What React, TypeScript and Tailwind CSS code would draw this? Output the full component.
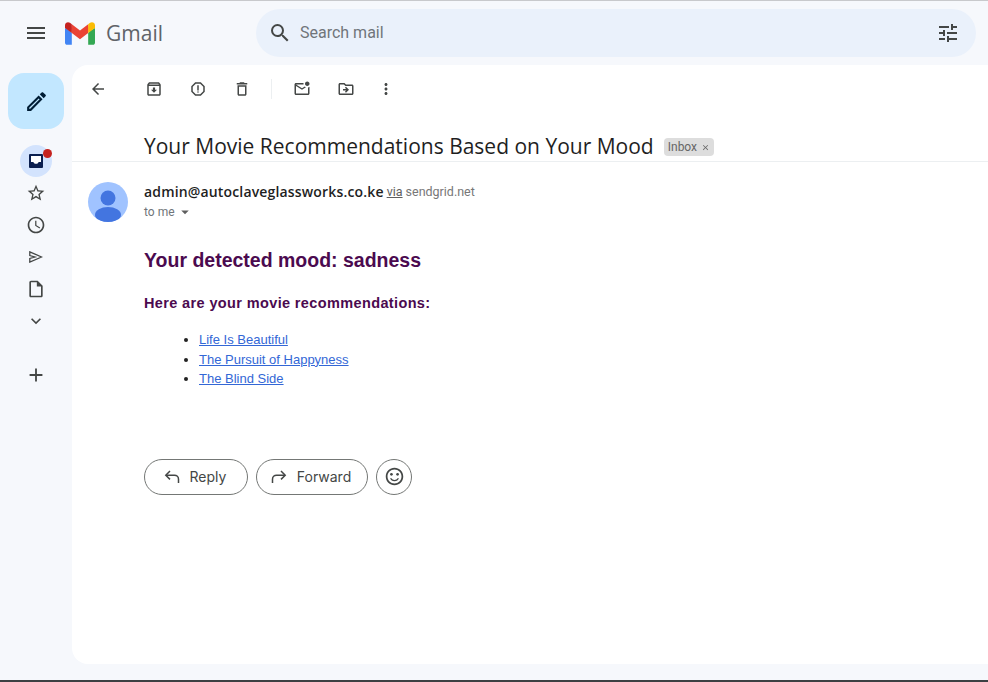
import {
  MdMenu,
  MdSearch,
  MdTune,
  MdOutlineEdit,
  MdStarBorder,
  MdOutlineSchedule,
  MdOutlineInsertDriveFile,
  MdExpandMore,
  MdAdd,
  MdArrowBack,
  MdOutlineArchive,
  MdOutlineReport,
  MdOutlineDelete,
  MdOutlineMarkEmailUnread,
  MdOutlineDriveFileMove,
  MdMoreVert,
  MdOutlineSentimentSatisfied,
  MdArrowDropDown,
  MdClose,
} from 'react-icons/md';

const movies = ['Life Is Beautiful', 'The Pursuit of Happyness', 'The Blind Side'];

const GmailLogo = () => (
  <svg viewBox="0 0 256 193" className="w-[30px] h-[23px]">
    <path fill="#4285F4" d="M58.182 192.05V93.14L27.507 65.077 0 49.504v125.091c0 9.658 7.825 17.455 17.455 17.455h40.727Z" />
    <path fill="#34A853" d="M197.818 192.05h40.727c9.659 0 17.455-7.826 17.455-17.455V49.505l-31.156 17.837-27.026 25.798v98.91Z" />
    <path fill="#EA4335" d="m58.182 93.14-4.174-38.647 4.174-36.989L128 69.868l69.818-52.364 4.669 34.992-4.669 40.644L128 145.504z" />
    <path fill="#FBBC04" d="M197.818 17.504V93.14L256 49.504V26.231c0-21.585-24.64-33.89-41.89-20.945l-16.292 12.218Z" />
    <path fill="#C5221F" d="m0 49.504 26.759 20.07L58.182 93.14V17.504L41.89 5.286C24.61-7.66 0 4.646 0 26.23v23.273Z" />
  </svg>
);

const Avatar = () => (
  <svg viewBox="0 0 40 40" className="w-10 h-10 shrink-0">
    <defs>
      <clipPath id="avatar-clip">
        <circle cx="20" cy="20" r="20" />
      </clipPath>
    </defs>
    <circle cx="20" cy="20" r="20" fill="#a0c3ff" />
    <g clipPath="url(#avatar-clip)" fill="#4375e0">
      <circle cx="20" cy="16" r="7.5" />
      <ellipse cx="20" cy="33" rx="13" ry="8" />
    </g>
  </svg>
);

const InboxIcon = () => (
  <svg viewBox="0 0 14 14" className="w-[14px] h-[14px]">
    <rect width="14" height="14" rx="1" fill="#0b1f4f" />
    <path fill="#ffffff" d="M2 2h10v6H9.5c0 1-1 1.8-2.5 1.8S4.5 9 4.5 8H2z" />
  </svg>
);

const SendIcon = () => (
  <svg viewBox="0 0 14 12" fill="none" stroke="currentColor" strokeWidth="1.3" className="w-[14px] h-3">
    <path d="M.8.9 12.6 6 .8 11.1V7.5L6 6 .8 4.5Z" />
  </svg>
);

// thin arrow, flipped for forward
const ReplyIcon = ({ flip }: { flip?: boolean }) => (
  <svg
    viewBox="0 0 20 20"
    fill="none"
    stroke="currentColor"
    strokeWidth="1.5"
    className={flip ? 'w-5 h-5 -scale-x-100' : 'w-5 h-5'}
  >
    <path d="M8 4 3.8 8.2 8 12.4" />
    <path d="M4 8.2h8.5a4 4 0 0 1 4 4V16" />
  </svg>
);

const App = () => {
  return (
    <div className="w-[988px] h-[682px] overflow-hidden flex flex-col bg-[#f6f8fc] font-['Roboto',sans-serif] border-t border-[#c8c9cc] border-b-2 border-b-[#3c4043]">
      {/* Top bar */}
      <header className="h-[64px] shrink-0 flex items-center">
        <div className="w-[72px] flex justify-center text-[#444746]">
          <MdMenu size={24} />
        </div>
        <div className="w-[184px] flex items-center -ml-[7px] gap-[11px]">
          <GmailLogo />
          <span className="font-['Open_Sans',sans-serif] text-[21px] text-[#5f6368] leading-none">Gmail</span>
        </div>
        <div className="ml-[7px] w-[720px] h-12 rounded-full bg-[#eaf1fb] flex items-center pl-[12px] pr-[16px]">
          <MdSearch size={24} className="text-[#444746]" />
          <span className="ml-[8px] text-base text-[#70757a]">Search mail</span>
          <MdTune size={24} className="ml-auto text-[#444746]" />
        </div>
      </header>

      <div className="flex flex-1 min-h-0 pb-[16px]">
        {/* Left rail */}
        <nav className="w-[72px] shrink-0 flex flex-col items-center text-[#444746]">
          <button className="w-14 h-14 mt-2 rounded-2xl bg-[#c2e7ff] flex items-center justify-center text-[#001d35]">
            <MdOutlineEdit size={25} />
          </button>
          <div className="relative mt-[16px] w-8 h-8 rounded-full bg-[#d3e3fd] flex items-center justify-center">
            <InboxIcon />
            <span className="absolute top-1 right-0 w-[9px] h-[9px] rounded-full bg-[#c5221f]" />
          </div>
          <div className="flex flex-col items-center">
            <div className="h-8 flex items-center"><MdStarBorder size={20} /></div>
            <div className="h-8 flex items-center"><MdOutlineSchedule size={20} /></div>
            <div className="h-8 flex items-center"><SendIcon /></div>
            <div className="h-8 flex items-center"><MdOutlineInsertDriveFile size={20} /></div>
            <div className="h-8 flex items-center"><MdExpandMore size={20} /></div>
          </div>
          <div className="mt-[22px] h-8 flex items-center"><MdAdd size={22} /></div>
        </nav>

        {/* Message card */}
        <main className="flex-1 min-w-0 bg-white rounded-l-2xl flex flex-col">
          <div className="h-12 shrink-0 flex items-center text-[#444746]">
            <MdArrowBack size={18} className="ml-[17px]" />
            <div className="ml-[38px] flex items-center gap-[26px]">
              <MdOutlineArchive size={18} />
              <MdOutlineReport size={18} />
              <MdOutlineDelete size={18} />
            </div>
            <div className="ml-5 mr-[21px] w-px h-5 bg-[#eceff1]" />
            <div className="flex items-center gap-[26px]">
              <MdOutlineMarkEmailUnread size={18} />
              <MdOutlineDriveFileMove size={18} />
              <MdMoreVert size={18} className="-ml-1" />
            </div>
          </div>

          <div className="h-[49px] shrink-0 flex items-start pt-[19px] pl-[72px] border-b border-[#eceff1]">
            <h1 className="font-['Open_Sans',sans-serif] text-[21px] text-[#1f1f1f] leading-7 whitespace-nowrap">
              Your Movie Recommendations Based on Your Mood
            </h1>
            <span className="ml-[10px] mt-[6px] h-[18px] px-1 rounded bg-[#dddddd] flex items-center text-xs text-[#666666]">
              Inbox
              <MdClose size={9} className="ml-[4px]" />
            </span>
          </div>

          <div className="flex pl-4 pt-5">
            <Avatar />
            <div className="ml-4">
              <div className="h-5 flex items-center whitespace-nowrap">
                <span className="font-['Open_Sans',sans-serif] text-sm font-semibold tracking-[0.16px] text-[#1f1f1f]">admin@autoclaveglassworks.co.ke</span>
                <span className="ml-[3px] text-[12.5px] text-[#5e5e5e] underline">via</span>
                <span className="ml-[3px] text-[12.5px] text-[#777777]">sendgrid.net</span>
              </div>
              <div className="h-5 flex items-center text-xs text-[#70757a]">
                to me
                <MdArrowDropDown size={18} className="ml-[1px] text-[#5e5e5e]" />
              </div>
            </div>
          </div>

          <div className="pl-[72px] pt-[24px] font-['Liberation_Sans',sans-serif]">
            <h2 className="text-[19.5px] font-bold leading-[28px] text-[#4b0a4f]">Your detected mood: sadness</h2>
            <p className="mt-[19px] text-[14.5px] font-bold leading-[20px] tracking-[0.37px] text-[#4b0a4f]">
              Here are your movie recommendations:
            </p>
            <ul className="mt-[17px] pl-[55px] list-disc text-[13px] leading-[19.5px] text-[#222222]">
              {movies.map((movie) => (
                <li key={movie}>
                  <a href="#" className="text-[#3367d6] underline">{movie}</a>
                </li>
              ))}
            </ul>
          </div>

          <div className="flex items-center gap-2 pl-[72px] mt-[70px] font-['Inter',sans-serif] text-sm text-[#444746]">
            <button className="h-9 w-[104px] pr-1 rounded-full border border-[#747775] flex items-center justify-center gap-[8px]">
              <ReplyIcon />
              Reply
            </button>
            <button className="h-9 w-[112px] pr-1 rounded-full border border-[#747775] flex items-center justify-center gap-[8px]">
              <ReplyIcon flip />
              Forward
            </button>
            <button className="h-9 w-9 rounded-full border border-[#747775] flex items-center justify-center">
              <MdOutlineSentimentSatisfied size={21} />
            </button>
          </div>
        </main>
      </div>
    </div>
  );
};

export default App;
